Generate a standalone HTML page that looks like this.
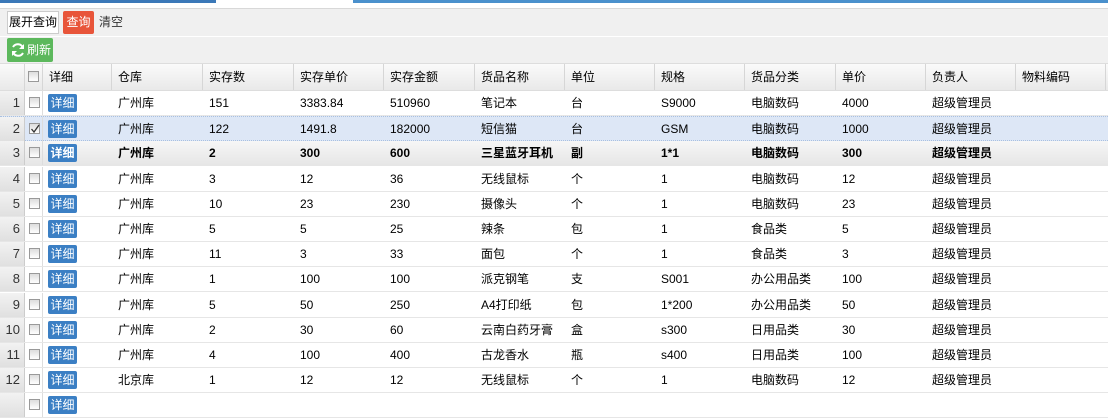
<!DOCTYPE html>
<html><head><meta charset="utf-8"><style>
*{margin:0;padding:0;box-sizing:border-box}
body{width:1108px;height:400px;overflow:hidden;background:#fff;font-family:"Liberation Sans","Noto Sans CJK SC",sans-serif;font-size:12px;color:#000;position:relative}
.abs{position:absolute}
.row{position:absolute;left:0;width:1108px;height:25px;border-bottom:1px solid #e6e6e6}
.c{position:absolute;top:0;height:24px;line-height:24px;padding-left:6px;white-space:nowrap}
.rn{position:absolute;left:0;top:0;width:25px;height:24px;line-height:24px;text-align:right;padding-right:4px;background:linear-gradient(#f2f2f2,#e0e0e0);border-right:1px solid #ccc;color:#333;font-size:13px;font-weight:normal}
.cbc{position:absolute;left:25px;top:0;width:18px;height:24px;border-right:1px solid #ddd}
.cb{position:absolute;left:4px;top:6px;width:11px;height:11px;border:1px solid #999;background:linear-gradient(#ddd,#fff)}
.btn{position:absolute;left:48px;top:3px;width:29px;height:18px;background:#3b7fc4;border-radius:2px;color:#fff;font-size:12px;line-height:18px;text-align:center}
.h{position:absolute;top:64px;height:26px;line-height:26px;padding-left:6px;border-right:1px solid #d6d6d6}
</style></head><body>
<div class="abs" style="left:0;top:0;width:216px;height:3px;background:#3b78b8"></div>
<div class="abs" style="left:353px;top:0;width:755px;height:3px;background:#4a90cc"></div>
<div class="abs" style="left:0;top:8px;width:1108px;height:56px;background:#f0f0f0;border-top:1px solid #d8d8d8"></div>
<div class="abs" style="left:0;top:36px;width:1108px;height:1px;background:#fff"></div>
<div class="abs" style="left:7px;top:11px;width:52px;height:23px;border:1px solid #ccc;background:#fff;line-height:21px;text-align:center;font-size:12px">展开查询</div>
<div class="abs" style="left:63px;top:11px;width:31px;height:23px;background:#e8553a;color:#fff;line-height:23px;text-align:center;border-radius:2px">查询</div>
<div class="abs" style="left:99px;top:11px;line-height:23px;color:#333">清空</div>
<div class="abs" style="left:7px;top:38px;width:46px;height:24px;background:#5cb85c;border-radius:2px;color:#fff;line-height:24px;font-size:12px;padding-left:20px">刷新
<svg class="abs" style="left:3px;top:4px" width="16" height="16" viewBox="0 0 16 16"><path d="M13 6A5.5 5.5 0 0 0 3 5M3 10a5.5 5.5 0 0 0 10 1" stroke="#fff" stroke-width="2" fill="none"/><path d="M14 2v5h-5zM2 14V9h5z" fill="#fff"/></svg></div>
<div class="abs" style="left:0;top:63px;width:1108px;height:28px;background:linear-gradient(#fafafa,#e9e9e9);border-top:1px solid #ddd;border-bottom:1px solid #ddd"></div>
<div class="h" style="left:0;width:25px"></div>
<div class="h" style="left:25px;width:18px"><div class="cb" style="left:3px;top:7px"></div></div>
<div class="h" style="left:43px;width:69px">详细</div>
<div class="h" style="left:112px;width:91px">仓库</div>
<div class="h" style="left:203px;width:91px">实存数</div>
<div class="h" style="left:294px;width:90px">实存单价</div>
<div class="h" style="left:384px;width:91px">实存金额</div>
<div class="h" style="left:475px;width:90px">货品名称</div>
<div class="h" style="left:565px;width:90px">单位</div>
<div class="h" style="left:655px;width:90px">规格</div>
<div class="h" style="left:745px;width:91px">货品分类</div>
<div class="h" style="left:836px;width:90px">单价</div>
<div class="h" style="left:926px;width:90px">负责人</div>
<div class="h" style="left:1016px;width:90px">物料编码</div>
<div id="rows"></div>
<script>
var d=[["广州库","151","3383.84","510960","笔记本","台","S9000","电脑数码","4000"],
["广州库","122","1491.8","182000","短信猫","台","GSM","电脑数码","1000"],
["广州库","2","300","600","三星蓝牙耳机","副","1*1","电脑数码","300"],
["广州库","3","12","36","无线鼠标","个","1","电脑数码","12"],
["广州库","10","23","230","摄像头","个","1","电脑数码","23"],
["广州库","5","5","25","辣条","包","1","食品类","5"],
["广州库","11","3","33","面包","个","1","食品类","3"],
["广州库","1","100","100","派克钢笔","支","S001","办公用品类","100"],
["广州库","5","50","250","A4打印纸","包","1*200","办公用品类","50"],
["广州库","2","30","60","云南白药牙膏","盒","s300","日用品类","30"],
["广州库","4","100","400","古龙香水","瓶","s400","日用品类","100"],
["北京库","1","12","12","无线鼠标","个","1","电脑数码","12"],
["","","","","","","","",""]];
var xs=[112,203,294,384,475,565,655,745,836];
var h="";
d.forEach(function(r,i){
 var top=Math.round(91+25.2*i),st="top:"+top+"px;";
 if(i==1)st+="background:#dde7f6;border-top:1px dotted #a9c0e0;border-bottom:1px dotted #a9c0e0;";
 if(i==2)st+="background:linear-gradient(#f6f6f6,#e6e6e6);font-weight:bold;";
 h+='<div class="row" style="'+st+'"><div class="rn">'+(i<12?i+1:"")+'</div><div class="cbc"><div class="cb">'+(i==1?'<svg style="position:absolute;left:0;top:0" width="10" height="10"><path d="M1.5 5l2.5 3 5-7" stroke="#333" stroke-width="1.3" fill="none"/></svg>':'')+'</div></div><div class="btn">详细</div>';
 r.forEach(function(v,j){h+='<div class="c" style="left:'+xs[j]+'px">'+v+'</div>'});
 if(i<12)h+='<div class="c" style="left:926px">超级管理员</div>';
 h+='</div>';
});
document.getElementById("rows").innerHTML=h;
</script>
</body></html>
